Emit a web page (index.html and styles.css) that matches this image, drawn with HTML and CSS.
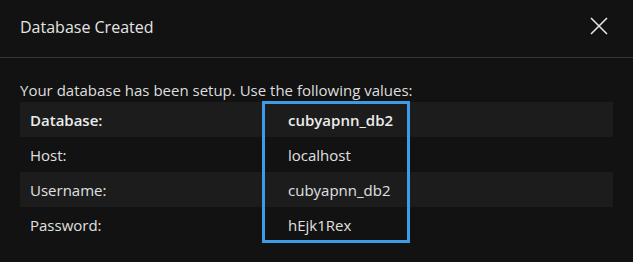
FILE: index.html
```html
<!DOCTYPE html>
<html>
<head>
<meta charset="utf-8">
<link rel="stylesheet" href="styles.css">
</head>
<body>
<div class="dialog">
  <div class="header">
    <div class="title">Database Created</div>
    <svg class="close" width="20" height="20" viewBox="0 0 20 20"><path d="M2 2 L18 18 M18 2 L2 18" stroke="#e4e4e4" stroke-width="1.6" fill="none"/></svg>
  </div>
  <div class="content">
    <p class="intro">Your database has been setup. Use the following values:</p>
    <div class="table">
      <div class="row striped strong"><span class="label">Database:</span><span class="value">cubyapnn_db2</span></div>
      <div class="row"><span class="label">Host:</span><span class="value">localhost</span></div>
      <div class="row striped"><span class="label">Username:</span><span class="value">cubyapnn_db2</span></div>
      <div class="row"><span class="label">Password:</span><span class="value">hEjk1Rex</span></div>
      <div class="highlight"></div>
    </div>
  </div>
</div>
</body>
</html>
```
FILE: styles.css
```css
html, body {
  margin: 0;
  padding: 0;
  background: #121212;
}
body {
  font-family: "Open Sans", "Noto Sans", sans-serif;
  color: #e2e2e2;
  width: 633px;
  height: 262px;
  overflow: hidden;
}
.header {
  height: 57px;
  border-bottom: 1px solid #363636;
  display: flex;
  align-items: center;
  justify-content: space-between;
  padding: 0 24px 0 20px;
}
.title {
  font-size: 16px;
  color: #e4e4e4;
  margin-top: -3px;
}
.close {
  margin-top: -5px;
}
.content {
  padding: 22px 20px 0 20px;
}
.intro {
  margin: 0 0 1px 0;
  font-size: 15px;
  line-height: 21px;
  color: #dedede;
}
.table {
  position: relative;
}
.row {
  display: grid;
  grid-template-columns: 242px 148px 1fr;
  height: 35px;
  align-items: center;
  font-size: 15px;
  color: #e0e0e0;
}
.row.striped {
  background: #1c1c1c;
}
.row.strong {
  font-weight: 600;
  color: #ececec;
}
.label {
  padding-left: 10px;
}
.value {
  padding-left: 26px;
}
.highlight {
  position: absolute;
  left: 242px;
  top: -1px;
  width: 148px;
  height: 142px;
  box-sizing: border-box;
  border: 3px solid #3d9be8;
}
```
